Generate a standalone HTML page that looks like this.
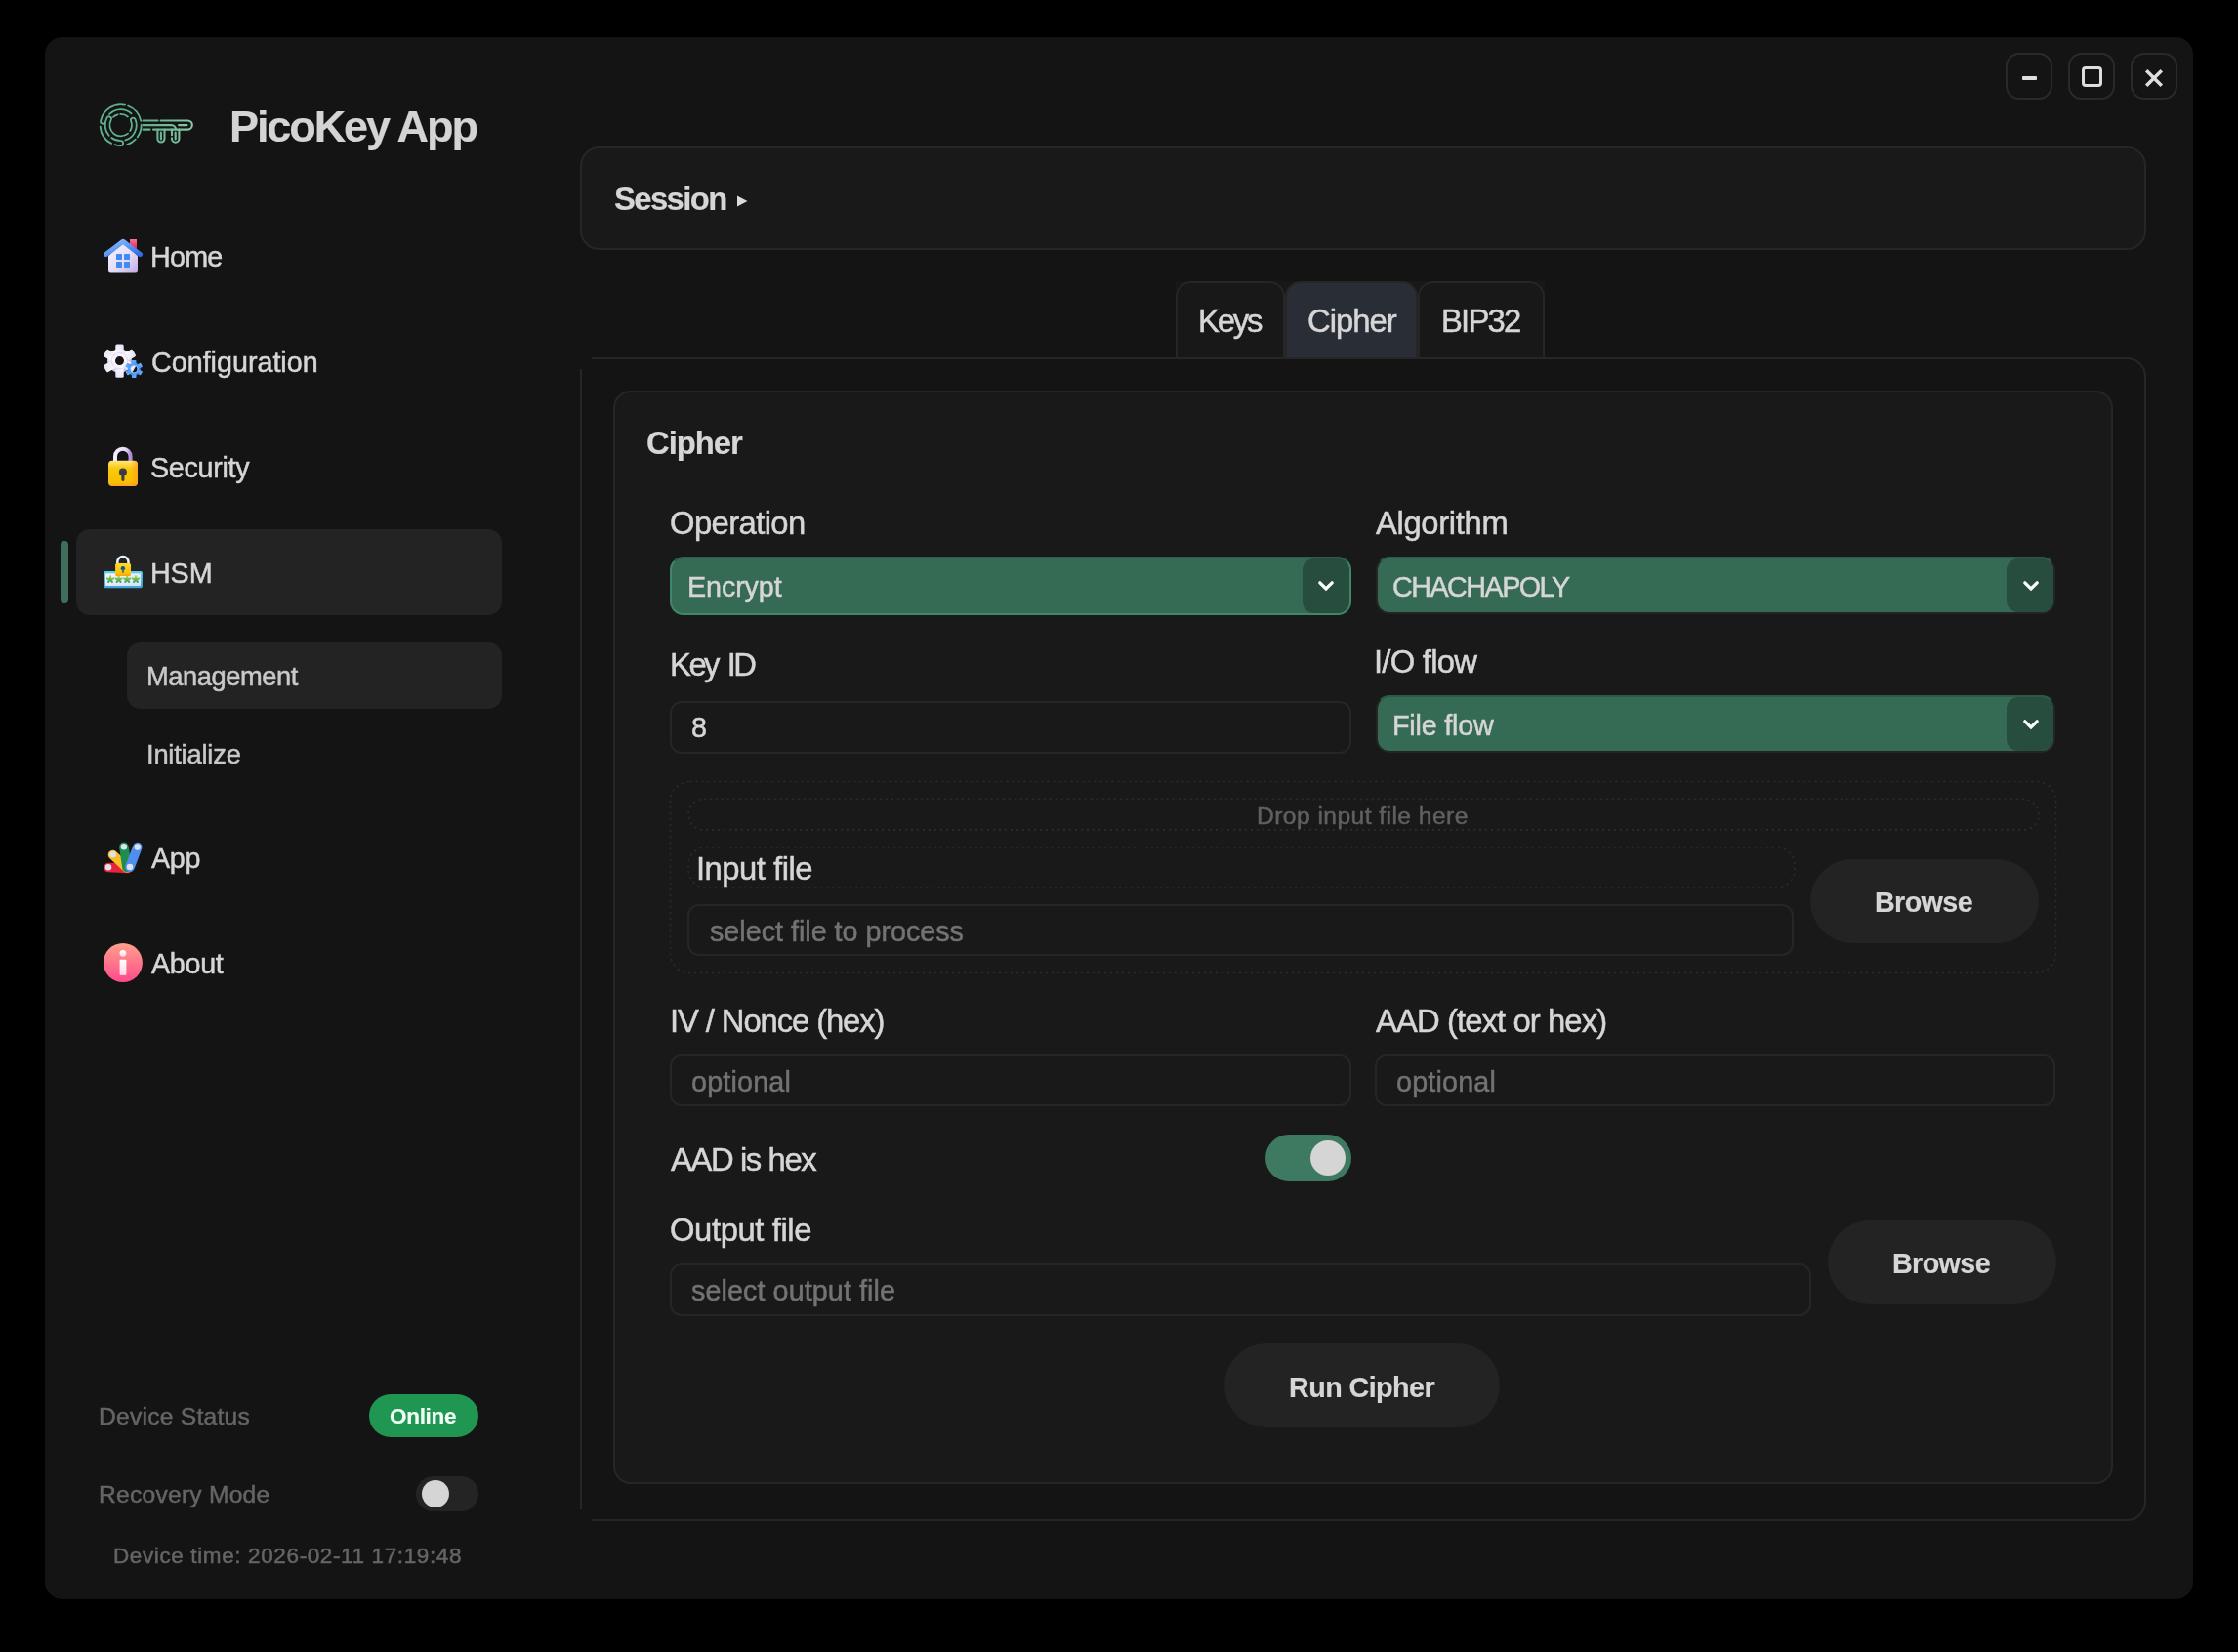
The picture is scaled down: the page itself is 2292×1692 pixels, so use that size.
<!DOCTYPE html>
<html><head><meta charset="utf-8">
<style>
*{box-sizing:border-box;margin:0;padding:0}
html,body{width:2292px;height:1692px;background:#000;overflow:hidden}
body{position:relative;font-family:"Liberation Sans",sans-serif;color:#d6d6d6;-webkit-font-smoothing:antialiased}
.t{will-change:transform;-webkit-text-stroke:0.5px currentColor}
.t.b{-webkit-text-stroke:0.2px currentColor}
.abs{position:absolute}
.t{position:absolute;line-height:1;white-space:nowrap;font-size:var(--s);top:calc(var(--b) - 0.8467 * var(--s));left:var(--x)}
.b{font-weight:bold}
#win{position:absolute;left:46px;top:38px;width:2200px;height:1600px;background:#141414;border-radius:18px;overflow:hidden}
.wbtn{position:absolute;top:54px;width:48px;height:48px;border:2px solid #2a2a2a;border-radius:14px}
.pill{position:absolute;background:#232323;border-radius:14px}
.card{position:absolute;border:2px solid #262626;background:#191919}
.inp{position:absolute;border:2px solid #262626;border-radius:12px;background:#191919}
.dd{position:absolute;background:#356a55;border-radius:14px;border:2px solid #242424;border-top-color:#2b5a46}
.ddc{position:absolute;top:0;bottom:0;right:0;width:48px;background:#264d3e;border-radius:12px}
.btn{position:absolute;background:#232323;border-radius:43px}
.lbl{color:#d6d6d6}
.ph{color:#737373}
</style></head><body>
<div id="win"></div>

<!-- window controls -->
<div class="wbtn" style="left:2054px"></div>
<div class="wbtn" style="left:2118px"></div>
<div class="wbtn" style="left:2182px"></div>
<div class="abs" style="left:2071px;top:78px;width:15px;height:4px;background:#dedede;border-radius:1px"></div>
<div class="abs" style="left:2132px;top:68px;width:21px;height:21px;border:3px solid #dedede;border-radius:4px"></div>
<svg class="abs" style="left:2190px;top:64px" width="32" height="32" viewBox="0 0 32 32"><path d="M8.2 8.2 L23.8 23.8 M23.8 8.2 L8.2 23.8" stroke="#dedede" stroke-width="3.5" stroke-linecap="butt"/></svg>

<div class="abs" style="left:62px;top:554px;width:8px;height:64px;background:#3f6e5a;border-radius:4px"></div>
<div class="pill" style="left:78px;top:542px;width:436px;height:88px"></div>
<div class="pill" style="left:130px;top:658px;width:384px;height:68px"></div>
<!-- logo -->
<svg class="abs" style="left:96px;top:100px" width="108" height="56" viewBox="96 100 108 56">
 <defs><linearGradient id="lg" gradientUnits="userSpaceOnUse" x1="100" y1="0" x2="196" y2="0"><stop offset="0" stop-color="#5aa886"/><stop offset="0.6" stop-color="#68b090"/><stop offset="1" stop-color="#86c6a9"/></linearGradient></defs>
 <g transform="translate(98 102) scale(0.031476)"><path d="M953.9 176.6 A668 668 0 0 0 161.6 691.1 A79.0 79.0 0 0 0 316.1 724.0 M436.0 1171.3 A510 510 0 0 1 364.7 590.6 A76.0 76.0 0 0 1 498.9 661.9 A358 358 0 0 0 1049.9 1100.2 M148.6 876.6 A668 668 0 0 0 511.7 1425.2 M515.2 1242.6 A510 510 0 0 0 815.0 1340.0 A79.0 79.0 0 0 1 815.0 1498.0 A668 668 0 0 1 619.7 1468.8 M1021.4 1465.3 A668 668 0 0 0 1295.5 1294.0 M964.1 1317.7 A510 510 0 0 0 1287.9 639.0 A76.0 76.0 0 0 0 1146.9 695.9 A358 358 0 0 1 1118.6 1019.7 M1054.4 206.4 A668 668 0 0 1 1468.4 691.1 M1482.9 818.3 A668 668 0 0 1 1355.4 1222.6 M448.1 475.7 A510 510 0 0 1 1162.8 457.0 M570.8 568.2 A358 358 0 0 1 716.3 485.9 M802.5 472.2 A358 358 0 0 1 1045.1 555.8 " fill="none" stroke="#5fb08d" stroke-width="58" stroke-linecap="round"/></g>
 <g fill="none" stroke="url(#lg)" stroke-width="2.1" stroke-linecap="round">
  <path d="M146.5 123.5 H161.5 M164.6 123.5 H192.3 A4.55 4.55 0 0 1 192.3 132.6 H157 M146.5 132.6 H153.5 M146.5 128.1 H175.5 A4.5 4.5 0 0 1 180 132.6 M183 128.1 H191.5"/>
  <path d="M161.4 132.6 V142 A3.55 3.55 0 0 0 168.5 142 V132.6 M164.9 135.5 V142.5"/>
  <path d="M176 132.6 V138.3 M176 141.3 V142 A3.7 3.7 0 0 0 183.4 142 V132.6 M179.7 135.5 V142.5"/>
 </g>
</svg>

<!-- house -->
<svg class="abs" style="left:100px;top:240px" width="50" height="44" viewBox="100 240 50 44">
 <defs>
  <linearGradient id="hb" x1="0" y1="0" x2="1" y2="1"><stop offset="0" stop-color="#f6f4ff"/><stop offset="0.6" stop-color="#e2daf3"/><stop offset="1" stop-color="#c2a8e2"/></linearGradient>
  <linearGradient id="hr" x1="0" y1="0" x2="1" y2="1"><stop offset="0" stop-color="#8cc0ff"/><stop offset="1" stop-color="#2f6fe8"/></linearGradient>
  <linearGradient id="hc" x1="0" y1="0" x2="0" y2="1"><stop offset="0" stop-color="#ff6f8f"/><stop offset="1" stop-color="#e0234f"/></linearGradient>
 </defs>
 <rect x="133" y="245" width="7" height="10" fill="url(#hc)"/>
 <path d="M111 262 L126 249 L141 262 V277 A2.5 2.5 0 0 1 138.5 279.5 H113.5 A2.5 2.5 0 0 1 111 277 Z" fill="url(#hb)"/>
 <path d="M108.5 260.6 L126 247.3 L143.5 260.6" fill="none" stroke="url(#hr)" stroke-width="5" stroke-linecap="round" stroke-linejoin="round"/>
 <g fill="#3d8bf5"><rect x="119" y="260" width="6" height="6" rx="0.8"/><rect x="127" y="260" width="6" height="6" rx="0.8"/><rect x="119" y="268" width="6" height="6" rx="0.8"/><rect x="127" y="268" width="6" height="6" rx="0.8"/></g>
</svg>
<!-- gear -->
<svg class="abs" style="left:100px;top:345px" width="50" height="50" viewBox="100 345 50 50">
 <defs>
  <radialGradient id="gg" gradientUnits="userSpaceOnUse" cx="118" cy="362" r="22"><stop offset="0" stop-color="#ffffff"/><stop offset="0.45" stop-color="#ebe5f7"/><stop offset="1" stop-color="#c4ade2"/></radialGradient>
  <linearGradient id="gb" gradientUnits="userSpaceOnUse" x1="130" y1="370" x2="145" y2="387"><stop offset="0" stop-color="#86c0ff"/><stop offset="0.5" stop-color="#2f86f3"/><stop offset="1" stop-color="#1a62e0"/></linearGradient>
 </defs>
 <mask id="gm1" maskUnits="userSpaceOnUse" x="100" y="345" width="50" height="50"><rect x="100" y="345" width="50" height="50" fill="#fff"/><circle cx="122.5" cy="369.6" r="4.5" fill="#000"/></mask>
 <g mask="url(#gm1)" fill="url(#gg)"><circle cx="122.5" cy="369.6" r="12.4"/><rect x="118.30" y="352.40" width="8.40" height="17.20" rx="1.51" transform="rotate(0 122.5 369.6)"/><rect x="118.30" y="352.40" width="8.40" height="17.20" rx="1.51" transform="rotate(60 122.5 369.6)"/><rect x="118.30" y="352.40" width="8.40" height="17.20" rx="1.51" transform="rotate(120 122.5 369.6)"/><rect x="118.30" y="352.40" width="8.40" height="17.20" rx="1.51" transform="rotate(180 122.5 369.6)"/><rect x="118.30" y="352.40" width="8.40" height="17.20" rx="1.51" transform="rotate(240 122.5 369.6)"/><rect x="118.30" y="352.40" width="8.40" height="17.20" rx="1.51" transform="rotate(300 122.5 369.6)"/></g>
 <circle cx="122.5" cy="369.6" r="8.2" fill="none" stroke="#d9cdee" stroke-width="1.2" opacity="0.6"/>
 <mask id="gm2" maskUnits="userSpaceOnUse" x="100" y="345" width="50" height="50"><rect x="100" y="345" width="50" height="50" fill="#fff"/><circle cx="137.2" cy="378.1" r="3.3" fill="#000"/></mask>
 <g mask="url(#gm2)" fill="url(#gb)"><circle cx="137.2" cy="378.1" r="6.6"/><rect x="134.90" y="369.10" width="4.60" height="9.00" rx="0.83" transform="rotate(0 137.2 378.1)"/><rect x="134.90" y="369.10" width="4.60" height="9.00" rx="0.83" transform="rotate(60 137.2 378.1)"/><rect x="134.90" y="369.10" width="4.60" height="9.00" rx="0.83" transform="rotate(120 137.2 378.1)"/><rect x="134.90" y="369.10" width="4.60" height="9.00" rx="0.83" transform="rotate(180 137.2 378.1)"/><rect x="134.90" y="369.10" width="4.60" height="9.00" rx="0.83" transform="rotate(240 137.2 378.1)"/><rect x="134.90" y="369.10" width="4.60" height="9.00" rx="0.83" transform="rotate(300 137.2 378.1)"/></g>
 <circle cx="137.2" cy="378.1" r="3.9" fill="none" stroke="#9fd0ff" stroke-width="1" opacity="0.7"/>
</svg>
<!-- lock -->
<svg class="abs" style="left:106px;top:454px" width="40" height="48" viewBox="106 454 40 48">
 <defs>
  <linearGradient id="ls" x1="0" y1="0" x2="1" y2="0"><stop offset="0" stop-color="#f2eeff"/><stop offset="0.7" stop-color="#e4dcf8"/><stop offset="1" stop-color="#a98ad8"/></linearGradient>
  <linearGradient id="lr" x1="0" y1="0" x2="1" y2="0"><stop offset="0.75" stop-color="#ff9a20" stop-opacity="0"/><stop offset="1" stop-color="#ff9a20" stop-opacity="0.7"/></linearGradient>
  <linearGradient id="lb" x1="0" y1="0" x2="0" y2="1"><stop offset="0" stop-color="#ffe680"/><stop offset="0.3" stop-color="#fbc90c"/><stop offset="0.85" stop-color="#f9c000"/><stop offset="1" stop-color="#fb9f2e"/></linearGradient>
 </defs>
 <path d="M118 475 V467.5 A7.8 7.8 0 0 1 133.6 467.5 V475" fill="none" stroke="url(#ls)" stroke-width="4"/>
 <rect x="111" y="471.8" width="30" height="26.3" rx="4" fill="url(#lb)"/>
 <rect x="111" y="471.8" width="30" height="26.3" rx="4" fill="url(#lr)"/>
 <circle cx="125.9" cy="483.6" r="4" fill="#3c3c44"/>
 <rect x="124.4" y="484" width="3" height="9" rx="1.4" fill="#3c3c44"/>
</svg>
<!-- hsm -->
<svg class="abs" style="left:102px;top:566px" width="48" height="40" viewBox="102 566 48 40">
 <defs>
  <linearGradient id="pb" x1="0" y1="0" x2="0" y2="1"><stop offset="0" stop-color="#60d0f2"/><stop offset="1" stop-color="#3fa3da"/></linearGradient>
  <linearGradient id="pf" x1="0" y1="0" x2="1" y2="1"><stop offset="0" stop-color="#f2f6ff"/><stop offset="1" stop-color="#d4e2f8"/></linearGradient>
  <linearGradient id="py" x1="0" y1="0" x2="0" y2="1"><stop offset="0" stop-color="#ffd92a"/><stop offset="0.8" stop-color="#ffbf00"/><stop offset="1" stop-color="#ff9a10"/></linearGradient>
  <linearGradient id="pg" x1="0" y1="0" x2="0" y2="1"><stop offset="0" stop-color="#a6d934"/><stop offset="1" stop-color="#3a9d62"/></linearGradient>
 </defs>
 <rect x="106.1" y="585" width="39.8" height="17.2" rx="1.8" fill="url(#pb)"/>
 <rect x="108" y="587.2" width="36" height="12.8" rx="0.8" fill="url(#pf)"/>
 <path d="M113.00 593.40 L113.00 590.20 M113.00 593.40 L116.04 592.41 M113.00 593.40 L114.88 595.99 M113.00 593.40 L111.12 595.99 M113.00 593.40 L109.96 592.41 M121.60 593.40 L121.60 590.20 M121.60 593.40 L124.64 592.41 M121.60 593.40 L123.48 595.99 M121.60 593.40 L119.72 595.99 M121.60 593.40 L118.56 592.41 M130.20 593.40 L130.20 590.20 M130.20 593.40 L133.24 592.41 M130.20 593.40 L132.08 595.99 M130.20 593.40 L128.32 595.99 M130.20 593.40 L127.16 592.41 M139.00 593.40 L139.00 590.20 M139.00 593.40 L142.04 592.41 M139.00 593.40 L140.88 595.99 M139.00 593.40 L137.12 595.99 M139.00 593.40 L135.96 592.41 " stroke="url(#pg)" stroke-width="2.1" stroke-linecap="round" fill="none"/>
 <path d="M120.3 578 V575.5 A5.6 5.6 0 0 1 131.5 575.5 V578" fill="none" stroke="#e6f2ff" stroke-width="2.5"/>
 <rect x="118.1" y="577" width="15.9" height="13" rx="1.6" fill="url(#py)"/>
 <circle cx="125.9" cy="582.3" r="2.2" fill="#0b5a8a"/><rect x="125.1" y="583" width="1.7" height="3.8" fill="#1f7a8a"/>
</svg>
<!-- app -->
<svg class="abs" style="left:102px;top:858px" width="48" height="40" viewBox="102 858 48 40">
 <g stroke-linecap="round" stroke-width="9.6" fill="none">
  <path d="M111 888.5 L131 889.5" stroke="#e8233a"/>
  <path d="M115.5 875.5 L130 889" stroke="#f6c026"/>
  <path d="M126.9 867.3 L130 888.5" stroke="#1e8e4e"/>
  <path d="M140.8 867.6 L133 888.3" stroke="#4f8ef0"/>
 </g>
 <g fill="#dde3f0"><circle cx="111" cy="888.3" r="3.3"/><circle cx="115.6" cy="875.3" r="3.3"/><circle cx="126.9" cy="867.3" r="3.3"/><circle cx="140.8" cy="867.6" r="3.3"/><circle cx="133" cy="888" r="3.3"/></g>
</svg>
<!-- about -->
<svg class="abs" style="left:102px;top:962px" width="48" height="48" viewBox="102 962 48 48">
 <defs><linearGradient id="ab" x1="0" y1="0" x2="0" y2="1"><stop offset="0" stop-color="#ffa08c"/><stop offset="1" stop-color="#ff4a8a"/></linearGradient>
 <linearGradient id="ai" x1="0" y1="0" x2="0" y2="1"><stop offset="0" stop-color="#ffffff"/><stop offset="1" stop-color="#ffd6e6"/></linearGradient></defs>
 <circle cx="125.9" cy="986" r="20" fill="url(#ab)"/>
 <circle cx="125.9" cy="976.3" r="3.4" fill="url(#ai)"/>
 <rect x="122.6" y="982.8" width="6.8" height="16" rx="0.6" fill="url(#ai)"/>
</svg>


<div class="t b" style="--x:235px;--b:145px;--s:45px;letter-spacing:-2.1px;color:#d4d4d4">PicoKey App</div>

<!-- nav -->

<div class="t" style="--x:154px;--b:273px;--s:28.7px;letter-spacing:-0.75px">Home</div>
<div class="t" style="--x:154.5px;--b:381px;--s:28.7px;letter-spacing:0px">Configuration</div>
<div class="t" style="--x:154px;--b:489px;--s:28.7px;letter-spacing:-0.3px">Security</div>
<div class="t" style="--x:154px;--b:597px;--s:28.7px;letter-spacing:-0.1px">HSM</div>
<div class="t" style="--x:150px;--b:702.5px;--s:27.3px;letter-spacing:-0.45px;color:#c9c9c9">Management</div>
<div class="t" style="--x:150px;--b:782.5px;--s:27.3px;letter-spacing:-0.2px;color:#c9c9c9">Initialize</div>
<div class="t" style="--x:155px;--b:889px;--s:28.7px;letter-spacing:-0.3px">App</div>
<div class="t" style="--x:155px;--b:997px;--s:28.7px;letter-spacing:-0.3px">About</div>

<!-- sidebar bottom -->
<div class="t" style="--x:101px;--b:1459.5px;--s:24.6px;color:#656565;letter-spacing:0.25px">Device Status</div>
<div class="abs" style="left:378px;top:1428px;width:112px;height:44px;background:#1f9652;border-radius:22px"></div>
<div class="t b" style="--x:399px;--b:1459px;--s:22.5px;color:#f2fff5;letter-spacing:-0.3px">Online</div>
<div class="t" style="--x:101px;--b:1539.5px;--s:24.6px;color:#656565;letter-spacing:0.25px">Recovery Mode</div>
<div class="abs" style="left:426px;top:1512px;width:64px;height:36px;background:#242424;border-radius:18px"></div>
<div class="abs" style="left:432px;top:1516px;width:28px;height:28px;background:#d5d5d5;border-radius:14px"></div>
<div class="t" style="--x:116px;--b:1602px;--s:22.5px;color:#656565;letter-spacing:0.62px">Device time: 2026-02-11 17:19:48</div>

<!-- session card -->
<div class="card" style="left:594px;top:150px;width:1604px;height:106px;border-radius:20px"></div>
<div class="t b" style="--x:629px;--b:216px;--s:32.8px;letter-spacing:-1.6px">Session</div>
<svg class="abs" style="left:755px;top:200px" width="11" height="12" viewBox="0 0 11 12"><path d="M0 0.5 L10.5 6 L0 11.5Z" fill="#dcdcdc"/></svg>

<!-- tabs -->
<div class="abs" style="left:1204px;top:288px;width:378px;height:79px;background:#181818"></div>
<div class="abs" style="left:1204px;top:288px;width:112px;height:80px;border:2px solid #262626;border-bottom:none;border-radius:16px 16px 0 0;background:#181818"></div>
<div class="abs" style="left:1316px;top:288px;width:136px;height:80px;border:2px solid #262626;border-bottom:none;border-radius:16px 16px 0 0;background:#292d36"></div>
<div class="abs" style="left:1452px;top:288px;width:130px;height:80px;border:2px solid #262626;border-bottom:none;border-radius:16px 16px 0 0;background:#181818"></div>
<div class="t" style="--x:1226.5px;--b:341px;--s:32.8px;letter-spacing:-2.2px">Keys</div>
<div class="t" style="--x:1339px;--b:341px;--s:32.8px;letter-spacing:-1px">Cipher</div>
<div class="t" style="--x:1475.5px;--b:341px;--s:32.8px;letter-spacing:-1.8px">BIP32</div>

<!-- tab panel -->
<div class="abs" style="left:594px;top:366px;width:1604px;height:1192px;border:2px solid #262626;border-radius:0 20px 20px 0"></div>
<div class="abs" style="left:592px;top:364px;width:14px;height:14px;background:#141414"></div>
<div class="abs" style="left:592px;top:1546px;width:14px;height:14px;background:#141414"></div>

<!-- inner card -->
<div class="card" style="left:628px;top:400px;width:1536px;height:1120px;border-radius:18px"></div>
<div class="t b" style="--x:662px;--b:466px;--s:32.8px;letter-spacing:-1px">Cipher</div>

<!-- Operation / Algorithm -->
<div class="t lbl" style="--x:686px;--b:548px;--s:32.8px;letter-spacing:-0.6px">Operation</div>
<div class="t lbl" style="--x:1409px;--b:548px;--s:32.8px;letter-spacing:-0.35px">Algorithm</div>
<div class="dd" style="left:686px;top:570px;width:698px;height:60px;border-color:#40876a;border-top-color:#2d5e4a"><div class="ddc"></div></div>
<div class="dd" style="left:1409px;top:570px;width:696px;height:59px"><div class="ddc"></div></div>
<div class="t" style="--x:704px;--b:611px;--s:28.7px;letter-spacing:-0.1px">Encrypt</div>
<div class="t" style="--x:1426px;--b:611px;--s:28.7px;letter-spacing:-1.5px">CHACHAPOLY</div>
<svg class="abs" style="left:1346px;top:590px" width="24" height="20" viewBox="0 0 24 20"><path d="M5.8 6.8 L12 13 L18.2 6.8" stroke="#fff" stroke-width="3.3" fill="none" stroke-linecap="round" stroke-linejoin="miter"/></svg>
<svg class="abs" style="left:2068px;top:590px" width="24" height="20" viewBox="0 0 24 20"><path d="M5.8 6.8 L12 13 L18.2 6.8" stroke="#fff" stroke-width="3.3" fill="none" stroke-linecap="round" stroke-linejoin="miter"/></svg>

<!-- Key ID / IO flow -->
<div class="t lbl" style="--x:686px;--b:693px;--s:32.8px;letter-spacing:-2.5px;word-spacing:3px">Key&nbsp;ID</div>
<div class="inp" style="left:686px;top:718px;width:698px;height:54px"></div>
<div class="t" style="--x:708px;--b:755px;--s:28.7px">8</div>
<div class="t lbl" style="--x:1407px;--b:690px;--s:32.8px;letter-spacing:-0.75px">I/O flow</div>
<div class="dd" style="left:1409px;top:712px;width:696px;height:59px"><div class="ddc"></div></div>
<div class="t" style="--x:1425.5px;--b:753px;--s:28.7px;letter-spacing:-0.2px">File flow</div>
<svg class="abs" style="left:2068px;top:732px" width="24" height="20" viewBox="0 0 24 20"><path d="M5.8 6.8 L12 13 L18.2 6.8" stroke="#fff" stroke-width="3.3" fill="none" stroke-linecap="round" stroke-linejoin="miter"/></svg>

<!-- drop zone -->
<svg class="abs" style="left:685px;top:799px" width="1422" height="199" viewBox="0 0 1422 199"><rect x="1.5" y="1.5" width="1419" height="196" rx="20" fill="none" stroke="#2d2d2d" stroke-width="1.6" stroke-dasharray="2 4"/></svg>
<svg class="abs" style="left:704px;top:817px" width="1385" height="35" viewBox="0 0 1385 35"><rect x="1" y="1.4" width="1383" height="31.5" rx="15.7" fill="none" stroke="#2d2d2d" stroke-width="1.6" stroke-dasharray="2 4"/></svg>
<div class="t" style="--x:1287px;--b:845px;--s:24.6px;color:#606060;letter-spacing:0.45px">Drop input file here</div>
<svg class="abs" style="left:704px;top:867px" width="1135" height="43" viewBox="0 0 1135 43"><rect x="1" y="1" width="1133" height="41" rx="18" fill="none" stroke="#2d2d2d" stroke-width="1.6" stroke-dasharray="2 4"/></svg>
<div class="t lbl" style="--x:713px;--b:902px;--s:32.8px;letter-spacing:-0.5px">Input file</div>
<div class="inp" style="left:704px;top:926px;width:1133px;height:53px"></div>
<div class="t ph" style="--x:727px;--b:964px;--s:28.7px;letter-spacing:0px">select file to process</div>
<div class="btn" style="left:1854px;top:880px;width:234px;height:86px"></div>
<div class="t b" style="--x:1920px;--b:934px;--s:28.7px;letter-spacing:-0.6px">Browse</div>

<!-- IV / AAD -->
<div class="t lbl" style="--x:685.5px;--b:1058px;--s:32.8px;letter-spacing:-1.1px">IV / Nonce (hex)</div>
<div class="inp" style="left:686px;top:1080px;width:698px;height:53px"></div>
<div class="t ph" style="--x:708px;--b:1118px;--s:28.7px;letter-spacing:0.2px">optional</div>
<div class="t lbl" style="--x:1409px;--b:1058px;--s:32.8px;letter-spacing:-0.9px">AAD (text or hex)</div>
<div class="inp" style="left:1408px;top:1080px;width:697px;height:53px"></div>
<div class="t ph" style="--x:1430px;--b:1118px;--s:28.7px;letter-spacing:0.2px">optional</div>

<!-- AAD is hex -->
<div class="t lbl" style="--x:687px;--b:1200px;--s:32.8px;letter-spacing:-1.4px">AAD is hex</div>
<div class="abs" style="left:1296px;top:1162px;width:88px;height:48px;background:#3d7a61;border-radius:24px"></div>
<div class="abs" style="left:1342px;top:1168px;width:36px;height:36px;background:#d5d5d5;border-radius:18px"></div>

<!-- Output -->
<div class="t lbl" style="--x:686px;--b:1272px;--s:32.8px;letter-spacing:-0.4px">Output file</div>
<div class="inp" style="left:686px;top:1294px;width:1169px;height:54px"></div>
<div class="t ph" style="--x:708px;--b:1332px;--s:28.7px;letter-spacing:0.1px">select output file</div>
<div class="btn" style="left:1872px;top:1250px;width:234px;height:86px"></div>
<div class="t b" style="--x:1938px;--b:1304px;--s:28.7px;letter-spacing:-0.6px">Browse</div>

<!-- Run -->
<div class="btn" style="left:1254px;top:1376px;width:282px;height:86px"></div>
<div class="t b" style="--x:1320px;--b:1431px;--s:28.7px;letter-spacing:-0.55px">Run Cipher</div>

</body></html>
